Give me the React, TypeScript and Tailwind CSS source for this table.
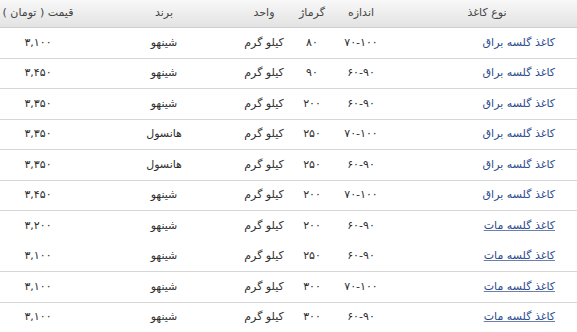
type Row = {
  kind: string
  size: string
  weight: string
  unit: string
  brand: string
  price: string
  link?: boolean
  noBorder?: boolean
}

const rows: Row[] = [
  { kind: 'کاغذ گلسه براق', size: '۷۰-۱۰۰', weight: '۸۰', unit: 'کیلو گرم', brand: 'شینهو', price: '۳,۱۰۰' },
  { kind: 'کاغذ گلسه براق', size: '۶۰-۹۰', weight: '۹۰', unit: 'کیلو گرم', brand: 'شینهو', price: '۳,۴۵۰' },
  { kind: 'کاغذ گلسه براق', size: '۶۰-۹۰', weight: '۲۰۰', unit: 'کیلو گرم', brand: 'شینهو', price: '۳,۳۵۰' },
  { kind: 'کاغذ گلسه براق', size: '۷۰-۱۰۰', weight: '۲۵۰', unit: 'کیلو گرم', brand: 'هانسول', price: '۳,۳۵۰' },
  { kind: 'کاغذ گلسه براق', size: '۶۰-۹۰', weight: '۲۵۰', unit: 'کیلو گرم', brand: 'هانسول', price: '۳,۳۵۰' },
  { kind: 'کاغذ گلسه براق', size: '۷۰-۱۰۰', weight: '۲۰۰', unit: 'کیلو گرم', brand: 'شینهو', price: '۳,۴۵۰' },
  { kind: 'کاغذ گلسه مات', size: '۶۰-۹۰', weight: '۲۰۰', unit: 'کیلو گرم', brand: 'شینهو', price: '۳,۲۰۰', link: true, noBorder: true },
  { kind: 'کاغذ گلسه مات', size: '۶۰-۹۰', weight: '۲۵۰', unit: 'کیلو گرم', brand: 'شینهو', price: '۳,۱۰۰', link: true },
  { kind: 'کاغذ گلسه مات', size: '۷۰-۱۰۰', weight: '۳۰۰', unit: 'کیلو گرم', brand: 'شینهو', price: '۳,۱۰۰', link: true },
  { kind: 'کاغذ گلسه مات', size: '۶۰-۹۰', weight: '۳۰۰', unit: 'کیلو گرم', brand: 'شینهو', price: '۳,۱۰۰', link: true },
]

// columns, right to left: kind | size | weight | unit | brand | price
const cols = 'grid grid-cols-[191px_50px_48px_48px_164px_76px] items-center'

export default function App() {
  return (
    <div
      dir="rtl"
      className="w-[577px] h-[332px] overflow-hidden bg-white text-[11px] text-[#2e2e2e]"
      style={{ fontFamily: '"DejaVu Sans", Tahoma, sans-serif' }}
    >
      {/* Header */}
      <div className={`${cols} h-[28px] border-b border-[#cfcfcf] bg-gradient-to-b from-[#f8f8f8] to-[#e3e3e3] text-[#444]`}>
        <div className="text-center pl-[11px]">نوع کاغذ</div>
        <div className="text-center">اندازه</div>
        <div className="text-center">گرماژ</div>
        <div className="text-center">واحد</div>
        <div className="text-center pl-3">برند</div>
        <div className="text-center">قیمت ( تومان )</div>
      </div>

      {/* Rows */}
      {rows.map((r, i) => (
        <div
          key={i}
          className={`${cols} h-[30.5px] ${r.noBorder ? '' : 'border-b border-[#d6d6d6]'}`}
        >
          <div className={`pr-[22px] text-right text-[#2b4a8e] ${r.link ? 'underline decoration-[#6b80b0]' : ''}`}>{r.kind}</div>
          <div className="text-center tracking-[1px]">{r.size}</div>
          <div className="text-center tracking-[1px]">{r.weight}</div>
          <div className="text-center">{r.unit}</div>
          <div className="text-center pl-3">{r.brand}</div>
          <div className="text-center tracking-[1px]">{r.price}</div>
        </div>
      ))}
    </div>
  )
}
